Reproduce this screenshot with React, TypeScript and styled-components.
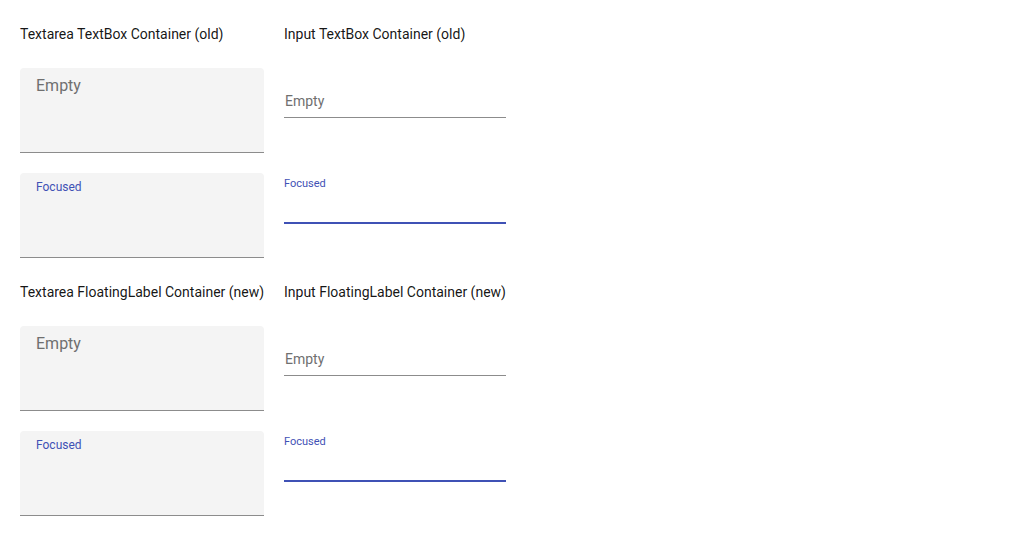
import React from 'react'
import styled, { createGlobalStyle } from 'styled-components'

const GlobalStyle = createGlobalStyle`
  html, body {
    margin: 0;
    padding: 0;
    background: #ffffff;
    font-family: Roboto, "Liberation Sans", Arial, sans-serif;
  }
`

const Page = styled.div`
  display: flex;
  flex-direction: column;
  gap: 24px;
  padding: 24px 20px;
`

const Section = styled.section`
  display: grid;
  grid-template-columns: 244px 222px;
  column-gap: 20px;
  row-gap: 20px;
`

const Heading = styled.h3`
  margin: 0 0 4px 0;
  font-size: 14px;
  font-weight: 400;
  line-height: 20px;
  color: rgba(0, 0, 0, 0.92);
  white-space: nowrap;
`

const TextareaBox = styled.div<{ $focused?: boolean }>`
  box-sizing: border-box;
  height: 85px;
  padding: ${p => (p.$focused ? '6px 16px 0' : '8px 16px 0')};
  background: #f4f4f4;
  border-radius: 4px 4px 0 0;
  border-bottom: 1px solid #8c8c8c;
`

const TextareaPlaceholder = styled.div`
  font-size: 16px;
  line-height: 20px;
  color: #6f6f6f;
`

const TextareaLabel = styled.div`
  font-size: 12px;
  line-height: 16px;
  color: #3f51b5;
`

const InputField = styled.div<{ $focused?: boolean }>`
  height: 49px;
  border-bottom: ${p => (p.$focused ? '2px solid #3f51b5' : '1px solid #8c8c8c')};
  box-sizing: content-box;
  align-self: start;
`

const InputPlaceholder = styled.div`
  padding: 22px 0 0 1px;
  font-size: 14px;
  line-height: 22px;
  color: #6f6f6f;
`

const InputLabel = styled.div`
  padding-top: 4px;
  font-size: 11px;
  line-height: 14px;
  color: #3f51b5;
`

const sections = [
  { left: 'Textarea TextBox Container (old)', right: 'Input TextBox Container (old)' },
  { left: 'Textarea FloatingLabel Container (new)', right: 'Input FloatingLabel Container (new)' },
]

export default function App() {
  return (
    <>
      <GlobalStyle />
      <Page>
        {sections.map(s => (
          <Section key={s.left}>
            <Heading>{s.left}</Heading>
            <Heading>{s.right}</Heading>

            <TextareaBox>
              <TextareaPlaceholder>Empty</TextareaPlaceholder>
            </TextareaBox>
            <InputField>
              <InputPlaceholder>Empty</InputPlaceholder>
            </InputField>

            <TextareaBox $focused>
              <TextareaLabel>Focused</TextareaLabel>
            </TextareaBox>
            <InputField $focused>
              <InputLabel>Focused</InputLabel>
            </InputField>
          </Section>
        ))}
      </Page>
    </>
  )
}
